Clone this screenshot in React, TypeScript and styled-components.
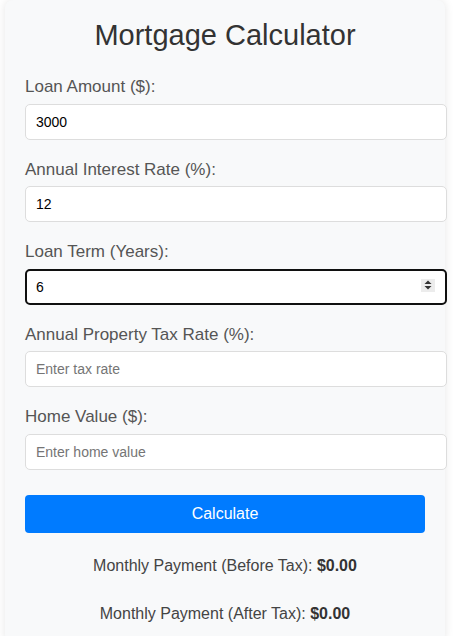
import {useState} from 'react';
import styled, {createGlobalStyle} from 'styled-components';

const GlobalStyle = createGlobalStyle`
body {
    margin: 0;
    background: #fff;
    font-family: "Liberation Sans", Arial, sans-serif;
}
`

const Container = styled.div`
width: 400px;
margin: 0 0 0 5px;
padding: 19px 20px 20px;
background: #f8f9fa;
border-radius: 8px;
box-shadow: 0 0 10px rgba(0, 0, 0, 0.1);
`

const Title = styled.h1`
margin: 0 0 25px;
font-size: 29px;
font-weight: normal;
color: #333;
text-align: center;
`

const FormGroup = styled.div`
margin-bottom: 20px;
`

const Label = styled.label`
display: block;
margin-bottom: 6.5px;
font-size: 17px;
color: #555;
`

const InputWrap = styled.div`
position: relative;
`

const Input = styled.input<{$focused?: boolean}>`
display: block;
width: 100%;
height: 14px;
margin: 0;
padding: ${p => p.$focused ? '9px' : '10px'};
font-family: "Liberation Sans", Arial, sans-serif;
font-size: 14px;
line-height: 14px;
color: #000;
background: #fff;
border: ${p => p.$focused ? '2px solid #101010' : '1px solid #ddd'};
border-radius: 5px;
outline: none;
-moz-appearance: textfield;

&::placeholder {
    color: #757575;
}

&::-webkit-inner-spin-button,
&::-webkit-outer-spin-button {
    -webkit-appearance: none;
    margin: 0;
}
`

const Spinner = styled.div`
position: absolute;
top: 10px;
right: -10px;
width: 14px;
height: 13px;
background: #ececec;
display: flex;
align-items: center;
justify-content: center;
`

const CalcButton = styled.button`
display: block;
width: 100%;
margin-top: 25px;
padding: 10px;
font-family: inherit;
font-size: 16px;
line-height: 18px;
color: #fff;
background: #007bff;
border: 0;
border-radius: 4px;
cursor: pointer;
`

const Results = styled.div`
margin-top: 24.5px;
display: flex;
flex-direction: column;
gap: 30px;
`

const ResultLine = styled.p`
margin: 0;
font-size: 16px;
line-height: 18px;
color: #444;
text-align: center;

strong {
    color: #333;
}
`

type FieldProps = {
    label: string;
    value: string;
    placeholder?: string;
    focused?: boolean;
    onChange: (v: string) => void;
}

function Field({label, value, placeholder, focused, onChange}: FieldProps) {
    return (
        <FormGroup>
            <Label>{label}</Label>
            <InputWrap>
                <Input
                    type="number"
                    value={value}
                    placeholder={placeholder}
                    $focused={focused}
                    onChange={e => onChange(e.target.value)}
                />
                {focused && (
                    <Spinner>
                        <svg width="8" height="10" viewBox="0 0 8 10">
                            <path d="M4 0.5 L7.5 4 L0.5 4 Z" fill="#333" />
                            <path d="M4 9.5 L7.5 6 L0.5 6 Z" fill="#333" />
                        </svg>
                    </Spinner>
                )}
            </InputWrap>
        </FormGroup>
    );
}

export default function App() {
    const [amount, setAmount] = useState('3000');
    const [rate, setRate] = useState('12');
    const [term, setTerm] = useState('6');
    const [tax, setTax] = useState('');
    const [home, setHome] = useState('');

    return (
        <>
            <GlobalStyle />
            <Container>
                <Title>Mortgage Calculator</Title>
                <Field label="Loan Amount ($):" value={amount} onChange={setAmount} />
                <Field label="Annual Interest Rate (%):" value={rate} onChange={setRate} />
                <Field label="Loan Term (Years):" value={term} focused onChange={setTerm} />
                <Field label="Annual Property Tax Rate (%):" value={tax} placeholder="Enter tax rate" onChange={setTax} />
                <Field label="Home Value ($):" value={home} placeholder="Enter home value" onChange={setHome} />
                <CalcButton>Calculate</CalcButton>
                <Results>
                    <ResultLine>Monthly Payment (Before Tax): <strong>$0.00</strong></ResultLine>
                    <ResultLine>Monthly Payment (After Tax): <strong>$0.00</strong></ResultLine>
                </Results>
            </Container>
        </>
    );
}
